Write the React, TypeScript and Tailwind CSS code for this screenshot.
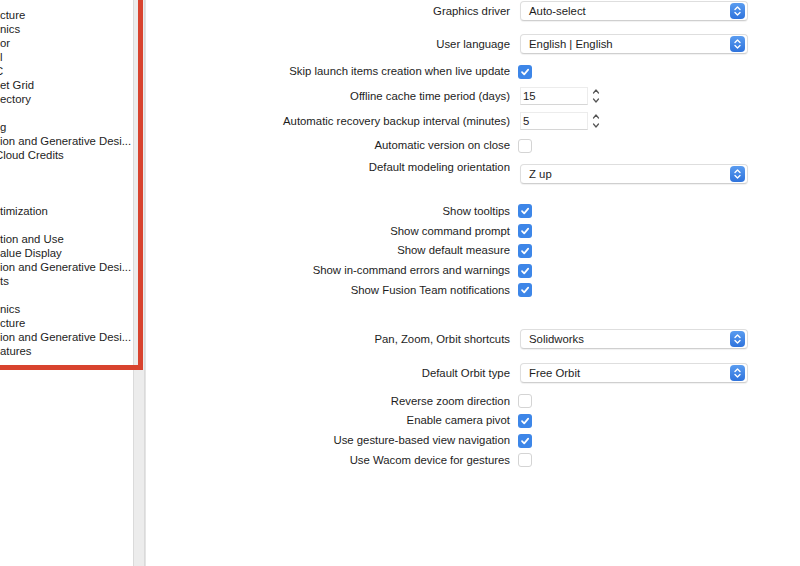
import React from 'react';

const font = { fontFamily: '"Liberation Sans", Arial, sans-serif' };

const sidebarItems = [
  'cture', 'nics', 'or', 'l', 'C', 'et Grid', 'ectory', '', 'g',
  'ion and Generative Desi...', 'Cloud Credits', '', '', '', 'timization', '',
  'tion and Use', 'alue Display', 'ion and Generative Desi...', 'ts', '',
  'nics', 'cture', 'ion and Generative Desi...', 'atures',
];

const Checkbox: React.FC<{ checked?: boolean }> = ({ checked }) =>
  checked ? (
    <span className="flex h-[14px] w-[14px] items-center justify-center rounded-[3px] bg-[#3d86e8]">
      <svg width="10" height="10" viewBox="0 0 10 10">
        <path d="M2 5.2 L4.2 7.4 L8.2 2.6" fill="none" stroke="white" strokeWidth="1.7" strokeLinecap="round" strokeLinejoin="round" />
      </svg>
    </span>
  ) : (
    <span className="block h-[14px] w-[14px] rounded-[3px] border border-[#d4d4d4] bg-white" />
  );

const Select: React.FC<{ value: string }> = ({ value }) => (
  <div className="flex h-[20px] w-[228px] items-center justify-between rounded-[4px] border border-[#dedede] border-b-[#cfcfcf] bg-white pl-[8px] pr-[2px] shadow-[0_1px_1px_rgba(0,0,0,0.06)]">
    <span className="pt-[1px]">{value}</span>
    <span className="flex h-[16px] w-[15px] items-center justify-center rounded-[4px] bg-gradient-to-b from-[#5a9cf0] to-[#2f73dc]">
      <svg width="9" height="12" viewBox="0 0 9 12">
        <path d="M2 4.5 L4.5 2 L7 4.5 M2 7.5 L4.5 10 L7 7.5" fill="none" stroke="white" strokeWidth="1.4" strokeLinecap="round" strokeLinejoin="round" />
      </svg>
    </span>
  </div>
);

const NumberField: React.FC<{ value: string }> = ({ value }) => (
  <div className="flex items-center">
    <div className="flex h-[18px] w-[68px] items-center border border-[#ececec] border-b-[#d6d6d6] bg-white pl-[2px] pt-[1px]">{value}</div>
    <svg className="ml-[3px]" width="10" height="18" viewBox="0 0 10 18">
      <path d="M2.5 6 L5 3 L7.5 6 M2.5 12 L5 15 L7.5 12" fill="none" stroke="#555" strokeWidth="1.2" strokeLinecap="round" strokeLinejoin="round" />
    </svg>
  </div>
);

const Row: React.FC<{ label: string; mt?: string; children: React.ReactNode }> = ({ label, mt = '', children }) => (
  <div className={`flex h-[20px] items-center ${mt}`}>
    <div className="w-[364px] pt-[1px] text-right">{label}</div>
    <div className="ml-[10px]">{children}</div>
  </div>
);

const CheckRow: React.FC<{ label: string; checked?: boolean; mt?: string }> = ({ label, checked, mt = '' }) => (
  <div className={`flex h-[19.75px] items-center ${mt}`}>
    <div className="w-[364px] text-right">{label}</div>
    <div className="ml-[8px]">
      <Checkbox checked={checked} />
    </div>
  </div>
);

export default function App() {
  return (
    <div className="flex h-[566px] w-[800px] overflow-hidden bg-white text-[11.35px] text-[#1d1d1d]" style={font}>
      {/* Sidebar */}
      <div className="relative flex h-full w-[146px] shrink-0 border-r border-[#e4e4e4]">
        <div className="w-[133px] overflow-hidden pt-[8px]">
          {sidebarItems.map((t, i) => (
            <div key={i} className={`h-[14px] whitespace-nowrap leading-[14px] ${t === 'Cloud Credits' || t === 'C' ? '-ml-[5px]' : ''}`}>
              {t}
            </div>
          ))}
        </div>
        <div className="w-[12px] border-l border-r border-[#dadada] bg-[#ececec]" />
        {/* annotation box */}
        <div className="absolute left-[-6px] top-[-6px] h-[376px] w-[149px] border-[5px] border-[#d8432e]" />
      </div>

      {/* Main panel */}
      <div className="flex-1 pt-[1px]">
        <Row label="Graphics driver"><Select value="Auto-select" /></Row>
        <Row label="User language" mt="mt-[13px]"><Select value="English | English" /></Row>
        <CheckRow label="Skip launch items creation when live update" checked mt="mt-[8px]" />
        <Row label="Offline cache time period (days)" mt="mt-[4px]"><NumberField value="15" /></Row>
        <Row label="Automatic recovery backup interval (minutes)" mt="mt-[5px]"><NumberField value="5" /></Row>
        <CheckRow label="Automatic version on close" mt="mt-[5px]" />
        <div className="mt-[8px] flex h-[20px] items-start">
          <div className="-mt-[4px] w-[364px] text-right leading-[14px]">Default modeling orientation</div>
          <div className="ml-[10px]"><Select value="Z up" /></div>
        </div>

        <div className="mt-[18px]">
          <CheckRow label="Show tooltips" checked />
          <CheckRow label="Show command prompt" checked />
          <CheckRow label="Show default measure" checked />
          <CheckRow label="Show in-command errors and warnings" checked />
          <CheckRow label="Show Fusion Team notifications" checked />
        </div>

        <Row label="Pan, Zoom, Orbit shortcuts" mt="mt-[29px]"><Select value="Solidworks" /></Row>
        <Row label="Default Orbit type" mt="mt-[14px]"><Select value="Free Orbit" /></Row>
        <div className="mt-[8px]">
          <CheckRow label="Reverse zoom direction" />
          <CheckRow label="Enable camera pivot" checked />
          <CheckRow label="Use gesture-based view navigation" checked />
          <CheckRow label="Use Wacom device for gestures" />
        </div>
      </div>
    </div>
  );
}
